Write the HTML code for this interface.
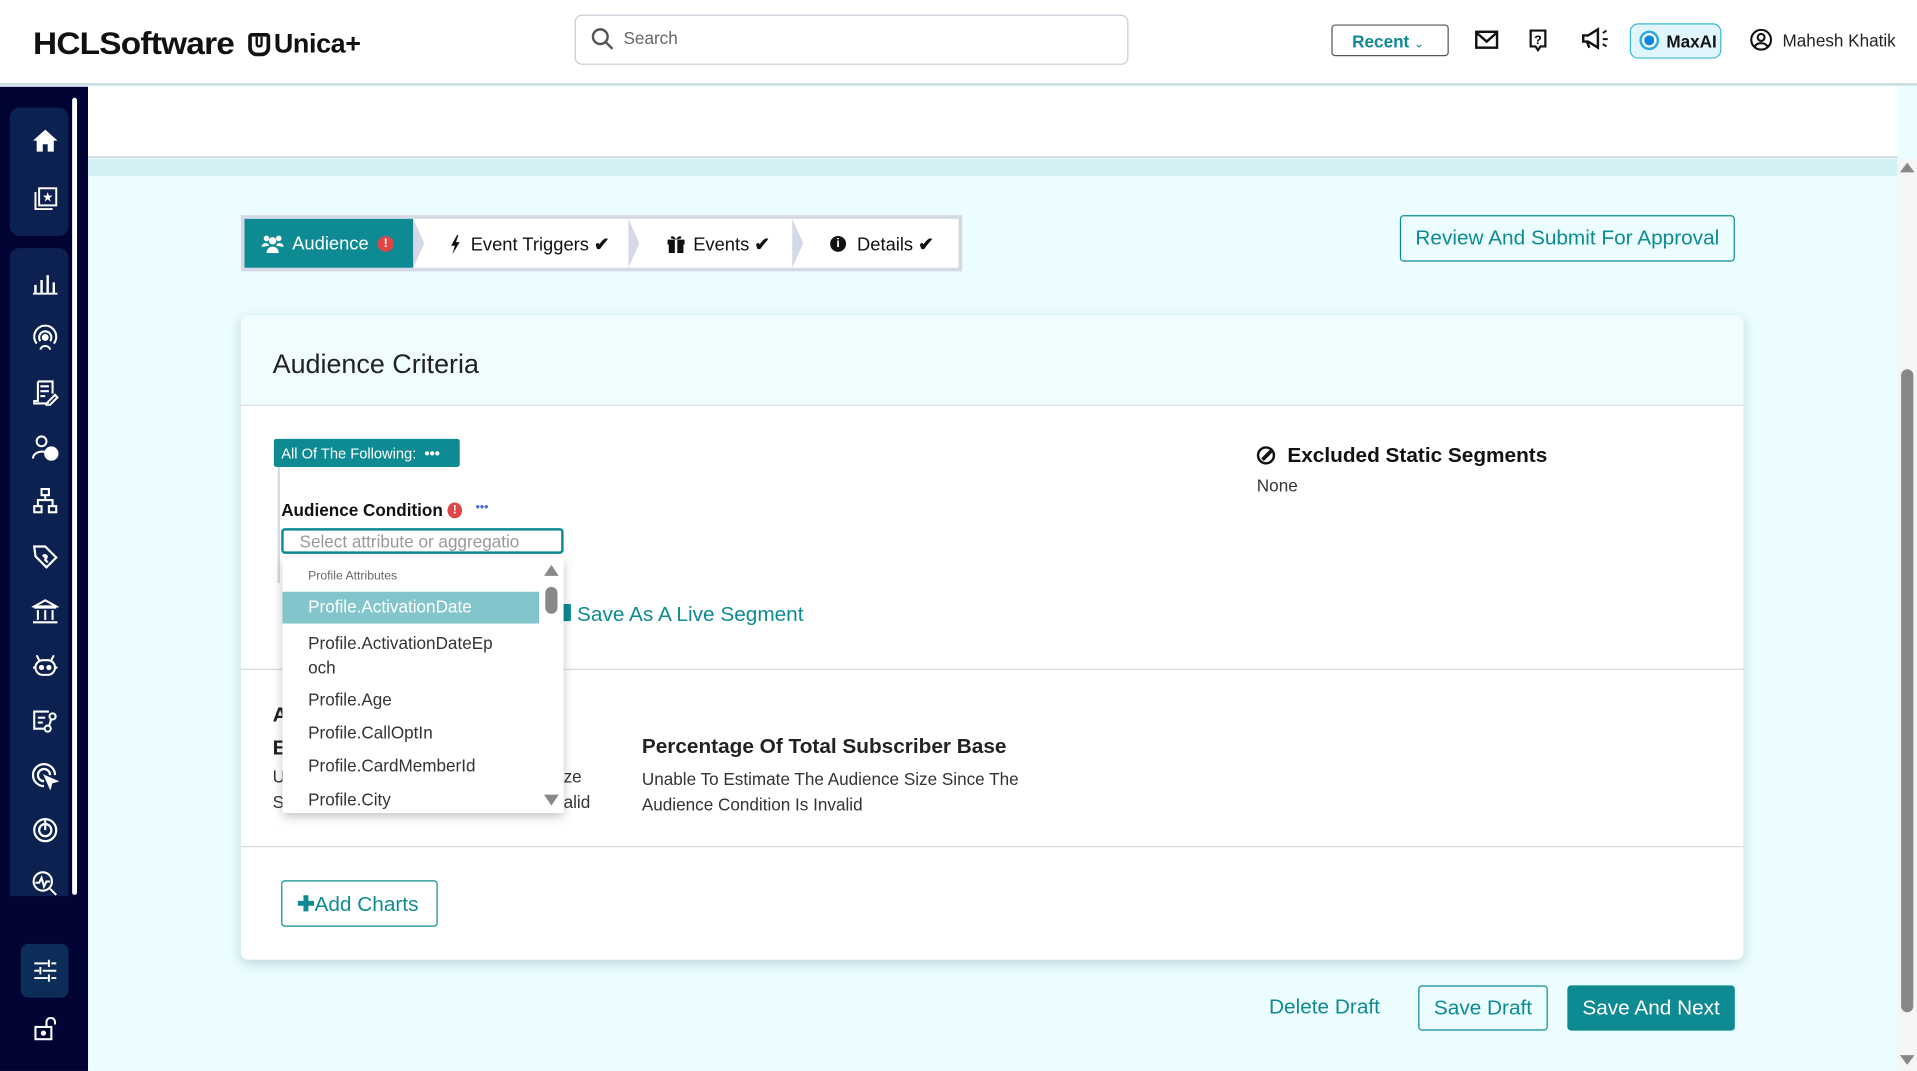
<!DOCTYPE html>
<html><head><meta charset="utf-8"><style>
*{box-sizing:border-box;margin:0;padding:0}
html,body{width:1917px;height:1071px;overflow:hidden;background:#ebfdff}
#w{width:1568px;height:876px;position:relative;transform:scale(1.22258);transform-origin:0 0;font-family:"Liberation Sans",sans-serif;color:#222}
.a{position:absolute}
.teal{color:#0e8a93}
svg{display:block}
.si{position:absolute;left:26px}
</style></head><body><div id="w">
<!-- header -->
<div class="a" style="left:0;top:0;width:1568px;height:70px;background:#fff;border-bottom:2px solid #c9dadd"></div>
<div class="a" style="left:27px;top:20px;font-size:26px;font-weight:bold;letter-spacing:-0.6px;color:#111;transform:scaleX(1.05);transform-origin:0 0">HCLSoftware</div>
<div class="a" style="left:203px;top:27px;width:18px;height:19px;border:3px solid #111;border-radius:3px 3px 7px 7px"></div>
<div class="a" style="left:209px;top:30px;width:6px;height:9px;border:2px solid #111;border-top:0;border-radius:0 0 3px 3px"></div>
<div class="a" style="left:224px;top:23px;font-size:22px;font-weight:bold;color:#111;letter-spacing:-0.3px">Unica+</div>
<div class="a" style="left:470px;top:12px;width:453px;height:41px;border:1px solid #c6ccd6;border-radius:6px"></div>
<svg class="a" style="left:483px;top:22px" width="20" height="20" viewBox="0 0 20 20"><circle cx="8" cy="8" r="6" fill="none" stroke="#555" stroke-width="2"/><path d="M12.5 12.5L18 18" stroke="#555" stroke-width="2"/></svg>
<div class="a" style="left:510px;top:23px;font-size:14px;color:#666">Search</div>
<div class="a" style="left:1089px;top:20px;width:96px;height:26px;border:1px solid #555;border-radius:3px;font-size:14px;font-weight:bold;color:#0e8a93;padding:5px 0 0 16px">Recent <span style="font-size:10px;font-weight:normal">&#8964;</span></div>
<svg class="a" style="left:1206px;top:24px" width="20" height="18" viewBox="0 0 20 18"><rect x="1.5" y="2" width="17" height="13" fill="none" stroke="#111" stroke-width="2"/><path d="M2 3l8 7 8-7" fill="none" stroke="#111" stroke-width="2"/></svg>
<svg class="a" style="left:1250px;top:23px" width="16" height="20" viewBox="0 0 16 20"><path d="M2 2h12v13H10l-2 3-2-3H2z" fill="none" stroke="#111" stroke-width="1.8"/><text x="8" y="13" font-size="10" text-anchor="middle" font-family="Liberation Sans" font-weight="bold">?</text></svg>
<svg class="a" style="left:1293px;top:22px" width="24" height="20" viewBox="0 0 24 20"><path d="M2 7h4l8-5v15l-8-5H2z M5 12l2 5" fill="none" stroke="#111" stroke-width="2"/><path d="M18 5l3-2M18 10h4M18 14l3 2" stroke="#111" stroke-width="1.6"/></svg>
<div class="a" style="left:1333px;top:19px;width:75px;height:29px;border:1.5px solid #38b8d8;border-radius:7px;background:#e0f5fd"></div>
<div class="a" style="left:1341px;top:25px;width:16px;height:16px;border-radius:50%;border:2px solid #2aa8e8;background:radial-gradient(circle,#0a86e0 45%,#fff 50%)"></div>
<div class="a" style="left:1363px;top:26px;font-size:14px;font-weight:bold;color:#111">MaxAI</div>
<svg class="a" style="left:1431px;top:23px" width="19" height="19" viewBox="0 0 20 20"><circle cx="10" cy="10" r="8.5" fill="none" stroke="#111" stroke-width="1.8"/><circle cx="10" cy="8" r="3" fill="none" stroke="#111" stroke-width="1.8"/><path d="M4.5 16c2-4 9-4 11 0" fill="none" stroke="#111" stroke-width="1.8"/></svg>
<div class="a" style="left:1458px;top:25px;font-size:14px;color:#222">Mahesh Khatik</div>

<!-- sidebar -->
<div class="a" style="left:0;top:71px;width:72px;height:805px;background:#020434"></div>
<div class="a" style="left:8px;top:88px;width:48px;height:105px;background:#0c2150;border-radius:8px"></div>
<div class="a" style="left:8px;top:203px;width:48px;height:530px;background:#0c2150;border-radius:8px 8px 0 0"></div>
<div class="a" style="left:59px;top:80px;width:4px;height:652px;background:#fff;border-radius:2px"></div>
<div class="a" style="left:17px;top:772px;width:39px;height:44px;background:#0b2d58;border-radius:6px"></div>
<g></g>
<svg class="si" style="top:105px" width="22" height="20" viewBox="0 0 22 20"><path d="M11 1L1 10h3v9h5v-6h4v6h5v-9h3z" fill="#fff"/></svg>
<svg class="si" style="top:152px" width="22" height="22" viewBox="0 0 22 22" fill="none" stroke="#fff" stroke-width="1.6"><rect x="6" y="2" width="14" height="14"/><path d="M3 5v14h14"/><path d="M13 5l1 3h3l-2.5 2 1 3-2.5-2-2.5 2 1-3L9 8h3z" fill="#fff" stroke="none"/></svg>
<svg class="si" style="top:221px" width="22" height="20" viewBox="0 0 22 20" stroke="#fff" stroke-width="2"><path d="M3 19V12M8 19V8M13 19V4M18 19V10M1 19.5h20"/></svg>
<svg class="si" style="top:265px" width="22" height="22" viewBox="0 0 22 22" fill="none" stroke="#fff" stroke-width="1.7"><path d="M4 16a9 9 0 1 1 14 0M7 14a5 5 0 1 1 8 0"/><circle cx="11" cy="11" r="2" fill="#fff"/><path d="M7 21c1-4 7-4 8 0"/></svg>
<svg class="si" style="top:310px" width="22" height="22" viewBox="0 0 22 22" fill="none" stroke="#fff" stroke-width="1.7"><path d="M5 2h12v10M5 2v16H2v2h12M7 6h7M7 10h7M7 14h4M12 20l7-7 2 2-7 7h-2z"/></svg>
<svg class="si" style="top:355px" width="22" height="22" viewBox="0 0 22 22" fill="none" stroke="#fff" stroke-width="1.7"><circle cx="8" cy="6" r="4"/><path d="M1 20c0-6 10-7 12-4"/><circle cx="16" cy="16" r="5" fill="#fff"/></svg>
<svg class="si" style="top:399px" width="22" height="22" viewBox="0 0 22 22" fill="none" stroke="#fff" stroke-width="1.7"><rect x="8" y="1" width="6" height="5"/><rect x="2" y="15" width="6" height="5"/><rect x="14" y="15" width="6" height="5"/><path d="M11 6v4M5 15v-5h12v5"/></svg>
<svg class="si" style="top:444px" width="22" height="22" viewBox="0 0 22 22" fill="none" stroke="#fff" stroke-width="1.8"><path d="M2 3h9l9 9-8 8-9-9z"/><path d="M9 11c2-2 4 0 3 1l-1 2 2 2" fill="#fff"/></svg>
<svg class="si" style="top:489px" width="22" height="22" viewBox="0 0 22 22" fill="none" stroke="#fff" stroke-width="1.7"><path d="M2 7l9-5 9 5zM2 8h18M5 10v8M11 10v8M17 10v8M1 20h20"/></svg>
<svg class="si" style="top:534px" width="22" height="22" viewBox="0 0 22 22" fill="none" stroke="#fff" stroke-width="1.7"><rect x="3" y="6" width="16" height="12" rx="6"/><circle cx="8" cy="12" r="1.3" fill="#fff"/><circle cx="14" cy="12" r="1.3" fill="#fff"/><path d="M6 6L4 2M16 6l2-4M1 12h2M19 12h2"/></svg>
<svg class="si" style="top:579px" width="22" height="22" viewBox="0 0 22 22" fill="none" stroke="#fff" stroke-width="1.7"><path d="M14 3H2v14h8M5 8h6M5 12h4"/><circle cx="17" cy="7" r="2.5"/><circle cx="13" cy="17" r="2.5"/><path d="M16 9l-2 6"/></svg>
<svg class="si" style="top:624px" width="22" height="22" viewBox="0 0 22 22" fill="none" stroke="#fff" stroke-width="1.8"><path d="M19 10A9 9 0 1 0 10 19M15 10a5 5 0 1 0-5 5"/><path d="M11 11l9 4-4 1-1 4z" fill="#fff"/></svg>
<svg class="si" style="top:668px" width="22" height="22" viewBox="0 0 22 22" fill="none" stroke="#fff" stroke-width="1.8"><circle cx="11" cy="11" r="9"/><circle cx="11" cy="11" r="5"/><path d="M11 2v9"/></svg>
<svg class="si" style="top:712px" width="22" height="22" viewBox="0 0 22 22" fill="none" stroke="#fff" stroke-width="1.7"><circle cx="9" cy="9" r="7.5"/><path d="M3 10h3l2-4 2 7 2-4h3M15 15l5 5"/></svg>
<svg class="si" style="left:27px;top:784px" width="20" height="20" viewBox="0 0 20 20" stroke="#fff" stroke-width="1.6"><path d="M1 4h11M15 4h4M13 1v6M1 10h4M8 10h11M6 7v6M1 16h11M15 16h4M13 13v6"/></svg>
<svg class="si" style="left:27px;top:832px" width="20" height="20" viewBox="0 0 20 20" fill="none" stroke="#fff" stroke-width="1.7"><rect x="2" y="8" width="13" height="10"/><path d="M11 8V4a3.5 3.5 0 0 1 7 0v2"/><circle cx="8.5" cy="13" r="1.3" fill="#fff"/></svg>

<!-- main bg -->
<div class="a" style="left:72px;top:71px;width:1480px;height:58px;background:#fff;border-bottom:1px solid #b9c6cc"></div>
<div class="a" style="left:72px;top:130px;width:1480px;height:14px;background:#d3f0f4"></div>
<div class="a" style="left:1552px;top:130px;width:16px;height:746px;background:#f4f6f6"></div>
<div class="a" style="left:1555px;top:302px;width:10px;height:526px;background:#888;border-radius:5px"></div>
<div class="a" style="left:1554px;top:133px;width:0;height:0;border:6px solid transparent;border-bottom:8px solid #888;border-top:0"></div>
<div class="a" style="left:1554px;top:863px;width:0;height:0;border:6px solid transparent;border-top:8px solid #888;border-bottom:0"></div>

<!-- stepper -->
<div class="a" style="left:197px;top:176px;width:590px;height:46px;background:#fff;border:3px solid #d5d8e6"></div>
<div class="a" style="left:200px;top:179px;width:138px;height:40px;background:#0e8a93"></div>
<div class="a" style="left:338px;top:179px;width:0;height:0;border-top:20px solid transparent;border-bottom:20px solid transparent;border-left:9px solid #d5d8e6"></div>
<div class="a" style="left:514px;top:179px;width:0;height:0;border-top:20px solid transparent;border-bottom:20px solid transparent;border-left:9px solid #d5d8e6"></div>
<div class="a" style="left:648px;top:179px;width:0;height:0;border-top:20px solid transparent;border-bottom:20px solid transparent;border-left:9px solid #d5d8e6"></div>
<svg class="a" style="left:214px;top:192px" width="18" height="15" viewBox="0 0 18 15" fill="#fff"><circle cx="4" cy="3" r="2.3"/><circle cx="14" cy="3" r="2.3"/><circle cx="9" cy="5" r="3"/><path d="M0 10c0-4 6-4 6-1zM18 10c0-4-6-4-6-1zM4 15c0-7 10-7 10 0z"/></svg>
<div class="a" style="left:239px;top:191px;font-size:15px;color:#fff">Audience</div>
<div class="a" style="left:309px;top:193px;width:13px;height:13px;border-radius:50%;background:#e04545;color:#fff;font-size:10px;font-weight:bold;text-align:center;line-height:13px">!</div>
<svg class="a" style="left:368px;top:192px" width="9" height="16" viewBox="0 0 9 16"><path d="M6 0L1 9h3l-2 7 6-10H5l2-6z" fill="#111"/></svg>
<div class="a" style="left:385px;top:191px;font-size:15px;color:#111">Event Triggers <b>&#10004;</b></div>
<svg class="a" style="left:546px;top:192px" width="14" height="15" viewBox="0 0 14 15" fill="#111"><rect x="0" y="4" width="14" height="4"/><rect x="1" y="8" width="12" height="7"/><path d="M7 4C5 0 2 1 3 3zM7 4c2-4 5-3 4-1z"/><rect x="6" y="4" width="2" height="11" fill="#fff"/></svg>
<div class="a" style="left:567px;top:191px;font-size:15px;color:#111">Events <b>&#10004;</b></div>
<div class="a" style="left:679px;top:193px;width:13px;height:13px;border-radius:50%;background:#111;color:#fff;font-size:10px;font-weight:bold;text-align:center;line-height:13px">i</div>
<div class="a" style="left:701px;top:191px;font-size:15px;color:#111">Details <b>&#10004;</b></div>
<div class="a" style="left:1145px;top:176px;width:274px;height:38px;border:1px solid #0e8a93;border-radius:3px;font-size:17px;color:#0e8a93;text-align:center;line-height:36px">Review And Submit For Approval</div>

<!-- card -->
<div class="a" style="left:197px;top:258px;width:1229px;height:527px;background:#fff;border-radius:6px;box-shadow:0 3px 10px rgba(100,140,150,.35)"></div>
<div class="a" style="left:197px;top:258px;width:1229px;height:74px;background:#f0fdff;border-radius:6px 6px 0 0;border-bottom:1px solid #d5dbe0"></div>
<div class="a" style="left:223px;top:285px;font-size:22px;color:#222">Audience Criteria</div>
<div class="a" style="left:197px;top:547px;width:1229px;height:1px;background:#d5d9dd"></div>
<div class="a" style="left:197px;top:692px;width:1229px;height:1px;background:#d5d9dd"></div>

<div class="a" style="left:224px;top:359px;width:152px;height:23px;background:#0e8a93;border-radius:2px;color:#fff;font-size:12px;padding:5px 0 0 6px">All Of The Following: &nbsp;<b>&#8226;&#8226;&#8226;</b></div>
<div class="a" style="left:227px;top:382px;width:2px;height:95px;background:#d6dbe4"></div>
<div class="a" style="left:230px;top:409px;font-size:14px;color:#111;font-weight:600">Audience Condition</div>
<div class="a" style="left:366px;top:411px;width:12px;height:13px;border-radius:50%;background:#e04545;color:#fff;font-size:10px;font-weight:bold;text-align:center;line-height:13px">!</div>
<div class="a" style="left:389px;top:410px;font-size:10px;color:#4a6fd8;font-weight:bold">&#8226;&#8226;&#8226;</div>
<div class="a" style="left:230px;top:432px;width:231px;height:21px;border:2px solid #0e8a93;border-radius:3px;font-size:14px;color:#999;padding:1px 0 0 13px;white-space:nowrap;overflow:hidden">Select attribute or aggregatio</div>
<div class="a" style="left:459px;top:494px;width:8px;height:14px;background:#0e8a93;border-radius:1px"></div>
<div class="a teal" style="left:472px;top:493px;font-size:17px">Save As A Live Segment</div>

<div class="a" style="left:223px;top:575px;font-size:17px;font-weight:bold">A</div>
<div class="a" style="left:223px;top:602px;font-size:17px;font-weight:bold">E</div>
<div class="a" style="left:223px;top:627px;font-size:14px;color:#333">U</div>
<div class="a" style="left:223px;top:648px;font-size:14px;color:#333">S</div>
<div class="a" style="left:461px;top:627px;font-size:14px;color:#333">ze</div>
<div class="a" style="left:461px;top:648px;font-size:14px;color:#333">alid</div>
<div class="a" style="left:525px;top:601px;font-size:17px;font-weight:bold;color:#222">Percentage Of Total Subscriber Base</div>
<div class="a" style="left:525px;top:627px;font-size:14px;color:#333;line-height:21px">Unable To Estimate The Audience Size Since The<br>Audience Condition Is Invalid</div>

<!-- dropdown -->
<div class="a" style="left:231px;top:456px;width:230px;height:209px;background:#fff;box-shadow:0 3px 8px rgba(0,0,0,.25);overflow:hidden">
<div class="a" style="left:21px;top:10px;font-size:10px;color:#666">Profile Attributes</div>
<div class="a" style="left:0;top:28px;width:210px;height:26px;background:#82c5cb"></div>
<div class="a" style="left:21px;top:32px;font-size:14px;color:#fff">Profile.ActivationDate</div>
<div class="a" style="left:21px;top:60px;font-size:14px;color:#333;line-height:20px">Profile.ActivationDateEp<br>och</div>
<div class="a" style="left:21px;top:108px;font-size:14px;color:#333">Profile.Age</div>
<div class="a" style="left:21px;top:135px;font-size:14px;color:#333">Profile.CallOptIn</div>
<div class="a" style="left:21px;top:162px;font-size:14px;color:#333">Profile.CardMemberId</div>
<div class="a" style="left:21px;top:190px;font-size:14px;color:#333">Profile.City</div>
<div class="a" style="left:214px;top:6px;border:6px solid transparent;border-bottom:9px solid #888;border-top:0"></div>
<div class="a" style="left:215px;top:24px;width:10px;height:22px;background:#888;border-radius:5px"></div>
<div class="a" style="left:214px;top:194px;border:6px solid transparent;border-top:9px solid #888;border-bottom:0"></div>
</div>

<!-- excluded -->
<div class="a" style="left:1028px;top:365px;width:15px;height:15px;border:2.5px solid #111;border-radius:50%"></div>
<div class="a" style="left:1031px;top:371px;width:10px;height:2.5px;background:#111;transform:rotate(-45deg)"></div>
<div class="a" style="left:1053px;top:363px;font-size:17px;color:#111;font-weight:600">Excluded Static Segments</div>
<div class="a" style="left:1028px;top:389px;font-size:14px;color:#333">None</div>

<div class="a" style="left:230px;top:720px;width:128px;height:38px;border:1px solid #0e8a93;border-radius:3px;font-size:17px;color:#0e8a93;padding:9px 0 0 12px"><b>&#10010;</b>Add Charts</div>

<!-- bottom buttons -->
<div class="a teal" style="left:1038px;top:814px;font-size:17px">Delete Draft</div>
<div class="a" style="left:1160px;top:806px;width:106px;height:37px;border:1px solid #0e8a93;border-radius:3px;font-size:17px;color:#0e8a93;text-align:center;line-height:35px">Save Draft</div>
<div class="a" style="left:1282px;top:806px;width:137px;height:37px;background:#0e8a93;border-radius:3px;font-size:17px;color:#fff;text-align:center;line-height:37px">Save And Next</div>
</div></body></html>
